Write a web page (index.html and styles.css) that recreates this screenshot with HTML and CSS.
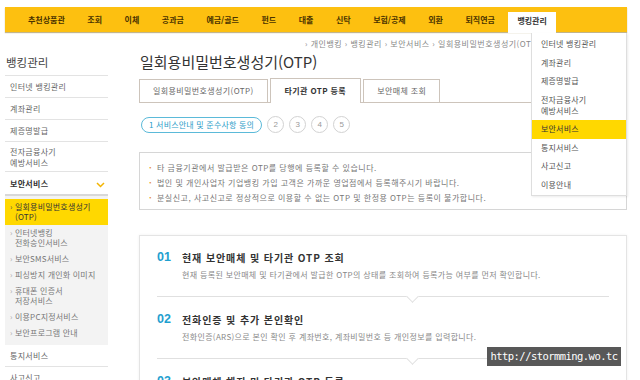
FILE: index.html
```html
<!DOCTYPE html>
<html lang="ko">
<head>
<meta charset="utf-8">
<title>일회용비밀번호생성기(OTP)</title>
<link rel="stylesheet" href="styles.css">
</head>
<body>
<div class="page">
  <header class="gnb">
    <ul class="gnb-list">
      <li>추천상품관</li>
      <li>조회</li>
      <li>이체</li>
      <li>공과금</li>
      <li>예금/골드</li>
      <li>펀드</li>
      <li>대출</li>
      <li>신탁</li>
      <li>보험/공제</li>
      <li>외환</li>
      <li>퇴직연금</li>
      <li class="active">뱅킹관리</li>
    </ul>
  </header>

  <div class="dropdown">
    <ul>
      <li>인터넷 뱅킹관리</li>
      <li>계좌관리</li>
      <li>제증명발급</li>
      <li class="two">전자금융사기<br>예방서비스</li>
      <li class="on">보안서비스</li>
      <li>통지서비스</li>
      <li>사고신고</li>
      <li>이용안내</li>
    </ul>
  </div>

  <div class="body-row">
    <aside class="lnb">
      <h2 class="lnb-title">뱅킹관리</h2>
      <ul class="lnb-list">
        <li>인터넷 뱅킹관리</li>
        <li>계좌관리</li>
        <li>제증명발급</li>
        <li class="two">전자금융사기<br>예방서비스</li>
        <li class="open">보안서비스
          <svg class="chev" width="9" height="6" viewBox="0 0 9 6"><polyline points="1,1 4.5,4.5 8,1" fill="none" stroke="#f3b400" stroke-width="1.5"/></svg>
        </li>
      </ul>
      <ul class="sub-list">
        <li class="on"><span class="arr">›</span><span>일회용비밀번호생성기<br>(OTP)</span></li>
        <li><span class="arr">›</span><span>인터넷뱅킹<br>전화승인서비스</span></li>
        <li><span class="arr">›</span><span>보안SMS서비스</span></li>
        <li><span class="arr">›</span><span>피싱방지 개인화 이미지</span></li>
        <li><span class="arr">›</span><span>휴대폰 인증서<br>저장서비스</span></li>
        <li><span class="arr">›</span><span>이용PC지정서비스</span></li>
        <li><span class="arr">›</span><span>보안프로그램 안내</span></li>
      </ul>
      <ul class="lnb-list after">
        <li>통지서비스</li>
        <li>사고신고</li>
      </ul>
    </aside>

    <main class="content">
      <div class="breadcrumb">› 개인뱅킹 › 뱅킹관리 › 보안서비스 › 일회용비밀번호생성기(OTP)</div>
      <h1 class="title">일회용비밀번호생성기(OTP)</h1>
      <div class="tabs">
        <div class="tab">일회용비밀번호생성기(OTP)</div>
        <div class="tab active">타기관 OTP 등록</div>
        <div class="tab">보안매체 조회</div>
      </div>
      <div class="steps">
        <span class="pill">1 서비스안내 및 준수사항 동의</span>
        <span class="circle">2</span>
        <span class="circle">3</span>
        <span class="circle">4</span>
        <span class="circle">5</span>
      </div>
      <ul class="notice">
        <li>타 금융기관에서 발급받은 OTP를 당행에 등록할 수 있습니다.</li>
        <li>법인 및 개인사업자 기업뱅킹 가입 고객은 가까운 영업점에서 등록해주시기 바랍니다.</li>
        <li>분실신고, 사고신고로 정상적으로 이용할 수 없는 OTP 및 한정용 OTP는 등록이 불가합니다.</li>
      </ul>
      <div class="process">
        <div class="proc-item">
          <div class="proc-head"><span class="num">01</span><span class="proc-title">현재 보안매체 및 타기관 OTP 조회</span></div>
          <p class="proc-desc">현재 등록된 보안매체 및 타기관에서 발급한 OTP의 상태를 조회하여 등록가능 여부를 먼저 확인합니다.</p>
        </div>
        <div class="proc-item">
          <div class="proc-head"><span class="num">02</span><span class="proc-title">전화인증 및 추가 본인확인</span></div>
          <p class="proc-desc">전화인증(ARS)으로 본인 확인 후 계좌번호, 계좌비밀번호 등 개인정보를 입력합니다.</p>
        </div>
        <div class="proc-item">
          <div class="proc-head"><span class="num">03</span><span class="proc-title">보안매체 해지 및 타기관 OTP 등록</span></div>
        </div>
      </div>
    </main>
  </div>

  <div class="watermark">http://stormming.wo.tc</div>
</div>
</body>
</html>
```
FILE: styles.css
```css
* { box-sizing: border-box; }
html, body { margin: 0; padding: 0; background: #fff; }
body {
  font-family: "Noto Sans CJK KR", "Noto Sans", sans-serif;
  color: #555;
  width: 640px;
  height: 380px;
  overflow: hidden;
}
ul { list-style: none; margin: 0; padding: 0; }
h1, h2, p { margin: 0; font-weight: normal; }

.page { position: relative; width: 640px; height: 380px; overflow: hidden; }

/* top navigation */
.gnb {
  margin: 7px 13px 0 5px;
  height: 25px;
  background: #fdc010;
  box-shadow: 0 1px 1px rgba(120, 90, 0, 0.45);
  position: relative;
  z-index: 3;
}
.gnb-list {
  display: flex;
  gap: 4.5px;
  padding-left: 14px;
  height: 25px;
}
.gnb-list li {
  padding: 0 9px;
  height: 25px;
  line-height: 25px;
  font-size: 8px;
  font-weight: bold;
  color: #4a3300;
  white-space: nowrap;
}
.gnb-list li.active {
  margin-top: 5px;
  height: 21px;
  line-height: 17px;
  background: #fff;
  color: #333;
}

/* dropdown menu */
.dropdown {
  position: absolute;
  left: 531px;
  top: 33px;
  width: 96px;
  height: 163px;
  background: #fff;
  border: 1px solid #dedede;
  border-top: none;
  padding-top: 2px;
  z-index: 4;
  box-shadow: 1px 1px 2px rgba(0,0,0,0.08);
}
.dropdown li {
  height: 18.5px;
  line-height: 18.5px;
  padding-left: 9px;
  font-size: 8px;
  letter-spacing: 0.2px;
  color: #555;
}
.dropdown li.two {
  height: 29.5px;
  line-height: 11px;
  padding-top: 3.5px;
}
.dropdown li.on { background: #ffd800; color: #333; }

/* body */
.body-row { display: flex; padding-left: 5px; }

.lnb { width: 103px; flex: none; }
.lnb-title {
  font-size: 11.5px;
  line-height: 16px;
  padding: 22px 0 5px 1px;
  color: #444;
  border-bottom: 1px solid #e3e3e3;
}
.lnb-list li {
  font-size: 8px;
  letter-spacing: 0.3px;
  line-height: 11px;
  padding: 5px 0 5px 5px;
  color: #666;
  border-bottom: 1px solid #e3e3e3;
  position: relative;
}
.lnb-list li.two { padding: 4px 0 3px 5px; }
.lnb-list li.open {
  font-weight: bold;
  color: #333;
  padding: 6px 0 5px 5px;
  border-bottom: 2px solid #d8d8d8;
}
.chev { position: absolute; right: 3px; top: 10px; }
.sub-list {
  background: #f3f3f3;
  padding: 3px 0 4px;
}
.sub-list li {
  display: flex;
  font-size: 8px;
  letter-spacing: 0.2px;
  line-height: 10px;
  padding: 3px 0 3px 5px;
  color: #777;
}
.sub-list li .arr { width: 5px; color: #aaa; flex: none; }
.sub-list li.on { background: #ffd800; color: #333; }
.sub-list li.on .arr { color: #555; }
.lnb-list.after li { padding: 5px 0 5px 5px; }

.content { margin-left: 31px; width: 488px; flex: none; }
.breadcrumb {
  padding: 6px 0 0 166px;
  font-size: 8px;
  letter-spacing: 0.5px;
  line-height: 11px;
  color: #888;
  white-space: nowrap;
}
.title {
  margin-top: 3px;
  font-size: 15px;
  line-height: 20px;
  color: #333;
  padding-left: 1px;
}
.tabs {
  margin-top: 7px;
  display: flex;
  gap: 2px;
  border-bottom: 1px solid #cdc4bb;
  height: 24px;
}
.tab {
  height: 23px;
  line-height: 22px;
  padding: 0 13px;
  border: 1px solid #cdc4bb;
  border-bottom: none;
  font-size: 8px;
  letter-spacing: 0.4px;
  color: #666;
  background: #fff;
  white-space: nowrap;
}
.tab.active {
  height: 25px;
  margin-top: -1px;
  line-height: 24px;
  font-weight: bold;
  color: #333;
  padding: 0 14px;
  position: relative;
}

.steps {
  margin-top: 13px;
  display: flex;
  align-items: center;
  gap: 5px;
  padding-left: 2px;
  height: 17px;
}
.pill {
  height: 16px;
  line-height: 13px;
  padding: 0 7px;
  border: 1.5px solid #5bbad9;
  border-radius: 8px;
  color: #2a9cc8;
  font-size: 8px;
  letter-spacing: 0.2px;
  white-space: nowrap;
}
.circle {
  width: 17px;
  height: 17px;
  border: 1px solid #d2d2d2;
  border-radius: 50%;
  text-align: center;
  line-height: 15px;
  font-size: 8px;
  color: #999;
  font-family: "Liberation Sans", sans-serif;
}

.notice {
  margin-top: 19px;
  border: 1px solid #d6d6d6;
  padding: 7px 0 4px 9px;
  height: 58px;
}
.notice li {
  font-size: 8px;
  letter-spacing: 0.5px;
  line-height: 15px;
  color: #777;
  white-space: nowrap;
}
.notice li::before {
  content: "·";
  color: #e58b2f;
  font-weight: bold;
  display: inline-block;
  width: 8px;
}

.process {
  margin-top: 25px;
  border: 1px solid #e4e4e4;
  box-shadow: 0 0 3px rgba(0,0,0,0.06);
  padding: 0 17px 0 17px;
  height: 160px;
}
.proc-item {
  padding: 13px 0 15px 0;
  border-bottom: 1px solid #e0e0e0;
  position: relative;
}
.proc-item + .proc-item { padding-top: 14px; }
.proc-item::after {
  content: "";
  position: absolute;
  left: 251px;
  bottom: -5px;
  width: 8px;
  height: 8px;
  background: #fff;
  border-right: 1px solid #e0e0e0;
  border-bottom: 1px solid #e0e0e0;
  transform: rotate(45deg);
}
.proc-item:last-child { border-bottom: none; }
.proc-item:last-child::after { display: none; }
.proc-head { display: flex; align-items: center; height: 16px; }
.num {
  width: 25px;
  font-family: "Liberation Sans", sans-serif;
  font-size: 12.5px;
  font-weight: bold;
  color: #1fa0cf;
}
.proc-title {
  font-size: 10px;
  font-weight: bold;
  color: #333;
  letter-spacing: 0.9px;
}
.proc-desc {
  margin-top: 4px;
  padding-left: 25px;
  font-size: 8px;
  letter-spacing: 0.35px;
  line-height: 12px;
  color: #888;
  white-space: nowrap;
}

.watermark {
  position: absolute;
  left: 487px;
  top: 347px;
  width: 134px;
  height: 19px;
  background: #585858;
  color: #fff;
  font-family: "DejaVu Sans Mono", monospace;
  font-size: 10.5px;
  letter-spacing: -0.55px;
  line-height: 19px;
  text-align: center;
  z-index: 5;
}
```
